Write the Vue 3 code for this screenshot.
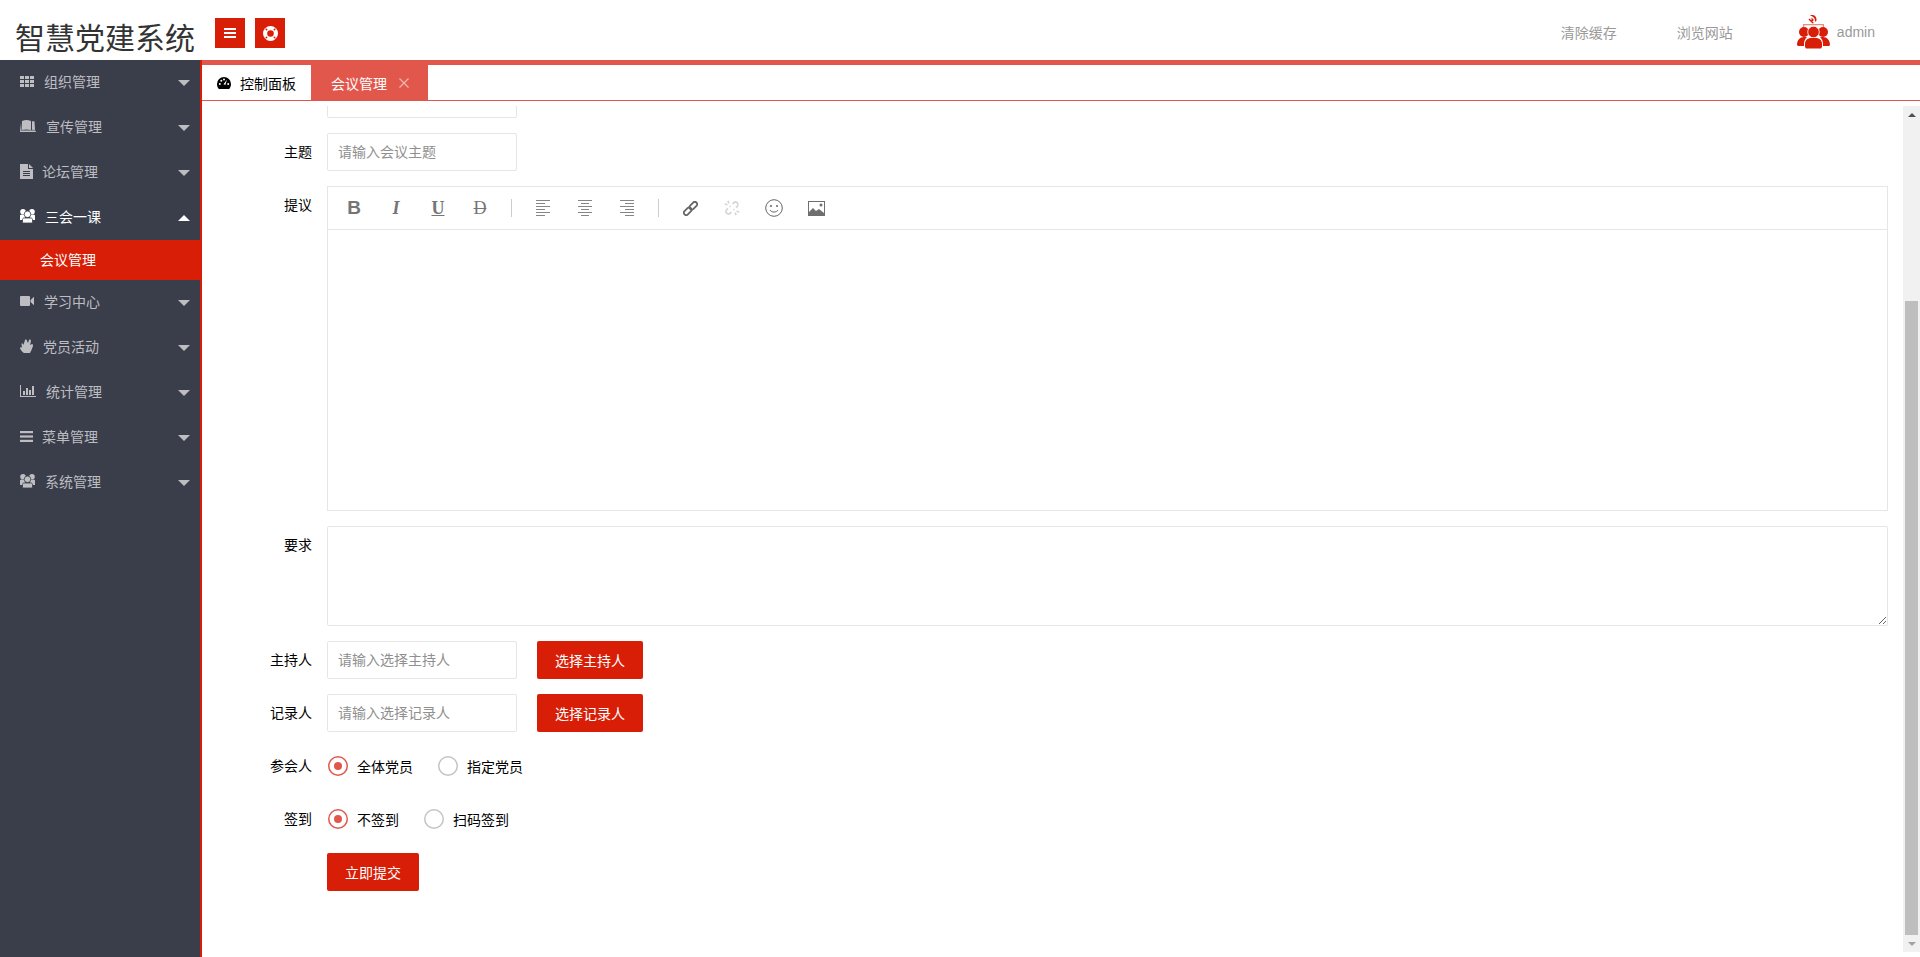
<script setup>
const people = (c) => `<g fill="${c}"><circle cx="3" cy="2.800" r="2.800"/><circle cx="12" cy="2.800" r="2.800"/><path d="M0 6.500C0 6 .5 5.800 1 5.800h4v5.200H0zM10 5.800h4c.5 0 1 .2 1 .7V11h-5z"/><g stroke="#3a3e4b" stroke-width=".8"><circle cx="7.500" cy="5.300" r="3.300"/><path d="M4 9h7c1 0 1.500.8 1.500 1.500V13c0 .6-.5 1-1 1h-8c-.5 0-1-.4-1-1v-2.500C2.500 9.800 3 9 4 9z"/></g></g>`
const menu = [
  { name: '组织管理', off: 24, w: 14, h: 11, svg: '<g fill="#bdbdc2"><rect x="0" y="0" width="4" height="3"/><rect x="5" y="0" width="4" height="3"/><rect x="10" y="0" width="4" height="3"/><rect x="0" y="4" width="4" height="3"/><rect x="5" y="4" width="4" height="3"/><rect x="10" y="4" width="4" height="3"/><rect x="0" y="8" width="4" height="3"/><rect x="5" y="8" width="4" height="3"/><rect x="10" y="8" width="4" height="3"/></g>' },
  { name: '宣传管理', off: 26, w: 16, h: 12, svg: '<path fill="#bdbdc2" d="M2 1c3-1.300 6-1.300 9 0v9c-3-.8-6-.8-9.500 0zM12 1.500c1-.4 1.800-.4 2.500 0l.5 8.500-3-.2zM.8 3 0 12h16l-.6-1.500H1z"/>' },
  { name: '论坛管理', off: 22, w: 13, h: 15, svg: '<path fill="#bdbdc2" d="M0 0h8v5h5v10H0z"/><path fill="#bdbdc2" d="M9 0l4 4H9z"/><g fill="#3a3e4b"><rect x="3" y="7" width="7" height="1"/><rect x="3" y="9" width="7" height="1"/><rect x="3" y="11" width="7" height="1"/></g>' },
  { name: '三会一课', off: 25, w: 15, h: 14, open: true, svg: people('#fff') },
  { name: '学习中心', off: 24, w: 14, h: 10, svg: '<path fill="#bdbdc2" d="M1 0h8a1 1 0 0 1 1 1v8a1 1 0 0 1-1 1H1a1 1 0 0 1-1-1V1a1 1 0 0 1 1-1zM10.500 4 14 .8v8.400L10.500 6z"/>' },
  { name: '党员活动', off: 23, w: 13, h: 14, svg: '<path fill="#bdbdc2" d="M5 1c1-1 2 0 2 1l1 2 1-3c1-1 2 0 2 1l-1 4 2-1c1 0 1 1 1 2-1 3-2 5-3 7H4C2 13 0 10 0 9c0-1 1-1 2-.5L1.500 5c0-1 1-1 1.500 0l.5 1z"/>' },
  { name: '统计管理', off: 26, w: 16, h: 12, svg: '<g fill="#bdbdc2"><rect x="0" y="0" width="1" height="12"/><rect x="0" y="11" width="16" height="1"/><rect x="3" y="6" width="2" height="4"/><rect x="6" y="3" width="2" height="7"/><rect x="9" y="5" width="2" height="5"/><rect x="12" y="1" width="2" height="9"/></g>' },
  { name: '菜单管理', off: 22, w: 13, h: 11, svg: '<g fill="#bdbdc2"><rect y="0" width="13" height="2.200"/><rect y="4.400" width="13" height="2.200"/><rect y="8.800" width="13" height="2.200"/></g>' },
  { name: '系统管理', off: 25, w: 15, h: 14, svg: people('#bdbdc2') }
]
const before = menu.slice(0, 4)
const after = menu.slice(4)
</script>

<template>
  <div class="app">
    <header class="top">
      <div class="logo">智慧党建系统</div>
      <button class="sq">
        <svg width="12" height="10" viewBox="0 0 12 10"><g fill="#fff"><rect width="12" height="2"/><rect y="4" width="12" height="2"/><rect y="8" width="12" height="2"/></g></svg>
      </button>
      <button class="sq sq2">
        <svg width="15" height="15" viewBox="0 0 15 15"><circle cx="7.500" cy="7.500" r="7.500" fill="#fff"/><circle cx="7.500" cy="7.500" r="3.300" fill="#d81e06"/><g stroke="#d81e06" stroke-width="1.300"><path d="M2.600 2.600 4.200 4.200M12.400 2.600l-1.600 1.600M2.600 12.400l1.600-1.600M12.400 12.400l-1.600-1.600"/></g></svg>
      </button>
      <nav class="tools">
        <span class="tool">清除缓存</span>
        <span class="tool t2">浏览网站</span>
        <svg class="party" width="33" height="34" viewBox="0 0 33 34">
          <g fill="#d81e06">
            <path d="M13 .5c3.500-1.500 7 .5 6.500 5L18 7C18.500 3.500 16.500 1.500 13 .5zM11.500 4.500l1-1 4.500 4.500-1.500.5zM14.500 2.500l2.500 2.500-2.500 2z"/>
            <path d="M6 9h21v1.200H6zM6 9h1.200v3H6zM25.800 9H27v3h-1.200z" opacity=".5"/>
            <circle cx="7" cy="17" r="5"/><circle cx="26" cy="17" r="5"/>
            <path d="M0 30c0-5 3-8 7-8h3c-2 2-3 4-3 7v2H1zM33 30c0-5-3-8-7-8h-3c2 2 3 4 3 7v2h6z"/>
            <circle cx="16.500" cy="17" r="5.800" stroke="#fff" stroke-width=".8"/>
            <path d="M8 32v-3c0-4 3-6 6-6h5c3 0 6 2 6 6v3l-1 1.500H9z"/>
          </g>
        </svg>
        <span class="user">admin</span>
      </nav>
    </header>
    <div class="body">
      <aside class="side">
        <div v-for="m in before" :key="m.name" class="item" :class="{ open: m.open }">
          <span class="ic" :style="{ width: m.off + 'px' }"><svg :width="m.w" :height="m.h" :viewBox="`0 0 ${m.w} ${m.h}`" v-html="m.svg"></svg></span>
          <span>{{ m.name }}</span>
          <i class="caret" :class="{ up: m.open }"></i>
        </div>
        <div class="sub">会议管理</div>
        <div v-for="m in after" :key="m.name" class="item">
          <span class="ic" :style="{ width: m.off + 'px' }"><svg :width="m.w" :height="m.h" :viewBox="`0 0 ${m.w} ${m.h}`" v-html="m.svg"></svg></span>
          <span>{{ m.name }}</span>
          <i class="caret"></i>
        </div>
      </aside>
      <main class="main">
        <div class="tabs">
          <div class="tab">
            <svg width="14" height="12" viewBox="0 0 14 12"><path fill="#000" d="M7 0a7 7 0 0 1 7 7c0 2-.7 3.700-1.800 5H1.800A7 7 0 0 1 0 7a7 7 0 0 1 7-7z"/><g fill="#fff"><circle cx="2.800" cy="7" r="1"/><circle cx="4.300" cy="3.800" r="1"/><circle cx="7" cy="2.400" r="1"/><circle cx="11.200" cy="7" r="1"/><path d="M10 2.800 8.300 8 6.500 7.300z"/></g></svg>
            <span>控制面板</span>
          </div>
          <div class="tab on">
            <span>会议管理</span>
            <svg width="10" height="10" viewBox="0 0 10 10"><path d="M.5.500l9 9M9.500.500l-9 9" stroke="#f2b6b1" stroke-width="1.200" fill="none"/></svg>
          </div>
        </div>
        <div class="pane">
          <div class="content">
            <form class="form" @submit.prevent>
              <div class="row"><label class="lab"></label><input class="inp" /></div>
              <div class="row"><label class="lab">主题</label><input class="inp" placeholder="请输入会议主题" /></div>
              <div class="row">
                <label class="lab">提议</label>
                <div class="editor">
                  <div class="bar">
                    <span class="b tb tB">B</span>
                    <span class="b tb tI">I</span>
                    <span class="b tb tU">U</span>
                    <span class="b tb tD">D</span>
                    <span class="sep"></span>
                    <span class="b"><svg width="14" height="16" viewBox="0 0 14 16"><path stroke="#858585" fill="none" d="M0 .5h14M0 3.500h9M0 6.500h14M0 9.500h9M0 12.500h14M0 15.500h9"/></svg></span>
                    <span class="b"><svg width="14" height="16" viewBox="0 0 14 16"><path stroke="#858585" fill="none" d="M0 .5h14M3 3.500h8M0 6.500h14M3 9.500h8M0 12.500h14M3 15.500h8"/></svg></span>
                    <span class="b"><svg width="14" height="16" viewBox="0 0 14 16"><path stroke="#858585" fill="none" d="M0 .5h14M5 3.500h9M0 6.500h14M5 9.500h9M0 12.500h14M5 15.500h9"/></svg></span>
                    <span class="sep"></span>
                    <span class="b"><svg width="15" height="15" viewBox="0 0 16 16"><g fill="none" stroke="#666" stroke-width="1.900" transform="rotate(-45 8 8)"><rect x="-1" y="5.500" width="9.500" height="5" rx="2.500"/><rect x="7.500" y="5.500" width="9.500" height="5" rx="2.500"/></g></svg></span>
                    <span class="b"><svg width="16" height="16" viewBox="0 0 16 16"><g fill="none" stroke="#d6d6d6" stroke-width="1.700"><path d="M8.500 4 10 2.500a2.600 2.600 0 0 1 3.600 3.600L12 7.700"/><path d="M7.500 12 6 13.500A2.600 2.600 0 0 1 2.400 9.900L4 8.300"/><path d="M4 .8l.8 2.700M.8 4l2.700.8M12 15.200l-.8-2.700M15.200 12l-2.700-.8M9.500 9l1 1M6.500 7l-1-1"/></g></svg></span>
                    <span class="b"><svg width="18" height="18" viewBox="0 0 18 18"><circle cx="9" cy="9" r="8.300" fill="none" stroke="#666" stroke-width="1"/><circle cx="6" cy="7" r="1" fill="#666"/><circle cx="12" cy="7" r="1" fill="#666"/><path d="M5 11c1.500 2.700 6.500 2.700 8 0" fill="none" stroke="#666"/></svg></span>
                    <span class="b"><svg width="17" height="15" viewBox="0 0 17 15"><path fill="#6f6f6f" d="M0 0h17v15H0zM1 1v13h15V1z" fill-rule="evenodd"/><path fill="#6f6f6f" d="M1 14v-3l4-4 3 3 3-2 5 4v2z"/><circle cx="13" cy="4" r="1.500" fill="#6f6f6f"/></svg></span>
                  </div>
                </div>
              </div>
              <div class="row"><label class="lab">要求</label><textarea class="area"></textarea></div>
              <div class="row">
                <label class="lab">主持人</label><input class="inp" placeholder="请输入选择主持人" />
                <button class="btn mg">选择主持人</button>
              </div>
              <div class="row">
                <label class="lab">记录人</label><input class="inp" placeholder="请输入选择记录人" />
                <button class="btn mg">选择记录人</button>
              </div>
              <div class="row">
                <label class="lab">参会人</label>
                <div class="radios">
                  <span class="radio on"></span><span class="rt">全体党员</span>
                  <span class="radio"></span><span class="rt">指定党员</span>
                </div>
              </div>
              <div class="row">
                <label class="lab">签到</label>
                <div class="radios">
                  <span class="radio on"></span><span class="rt">不签到</span>
                  <span class="radio"></span><span class="rt">扫码签到</span>
                </div>
              </div>
              <div class="row"><label class="lab"></label><button class="btn">立即提交</button></div>
            </form>
          </div>
          <div class="scroll">
            <span class="arr aup"></span>
            <span class="thumb"></span>
            <span class="arr adn"></span>
          </div>
        </div>
      </main>
    </div>
  </div>
</template>

<style scoped>
.app { width: 1920px; height: 957px; display: flex; flex-direction: column; overflow: hidden; background: #fff; font: 14px "Liberation Sans", "Noto Sans CJK SC", sans-serif; color: #000; }
.top { height: 60px; flex: none; display: flex; align-items: flex-start; }
.logo { font-size: 30px; line-height: 30px; color: #333; margin: 24px 0 0 15px; white-space: nowrap; }
.sq { width: 30px; height: 30px; margin: 18px 0 0 20px; padding: 0; border: 0; background: #d81e06; display: flex; align-items: center; justify-content: center; }
.sq2 { margin-left: 10px; }
.tools { margin-left: auto; height: 60px; padding: 3px 45px 0 0; box-sizing: border-box; display: flex; align-items: center; color: #999; }
.tool { margin-right: 60px; }
.t2 { margin-right: 64px; }
.party { margin: 1px 7px 0 0; }
.user { font-size: 14px; }
.body { flex: 1; display: flex; min-height: 0; }
.side { width: 200px; flex: none; background: #3a3e4b; border-right: 2px solid #d81e06; color: #bdbdc2; }
.item { height: 45px; box-sizing: border-box; display: flex; align-items: center; padding: 0 0 3px 20px; position: relative; }
.item.open { color: #fff; }
.ic { display: flex; align-items: center; flex: none; }
.ic svg { display: block; }
.caret { position: absolute; right: 10px; top: 20px; border: 6px solid transparent; border-bottom: 0; border-top: 6px solid #bdbdc2; }
.caret.up { border-top: 0; border-bottom: 6px solid #fff; }
.sub { height: 40px; line-height: 40px; margin-right: -2px; padding-left: 40px; background: #d81e06; color: #fff; position: relative; }
.main { flex: 1; min-width: 0; display: flex; flex-direction: column; }
.tabs { height: 41px; flex: none; box-sizing: border-box; border-top: 5px solid #e2574c; border-bottom: 1px solid #e2574c; display: flex; }
.tab { display: flex; align-items: center; padding: 0 15px; gap: 9px; height: 35px; }
.tab.on { background: #e2574c; color: #fff; padding: 0 19px 0 20px; gap: 12px; }
.pane { flex: 1; min-height: 0; margin: 5px 0; display: flex; }
.content { flex: 1; min-width: 0; overflow: hidden; padding-right: 15px; }
.form { margin-top: -26px; display: flex; flex-direction: column; gap: 15px; }
.row { display: flex; align-items: flex-start; }
.lab { width: 110px; flex: none; margin-right: 15px; text-align: right; line-height: 38px; }
.inp { width: 190px; height: 38px; box-sizing: border-box; border: 1px solid #e6e6e6; border-radius: 2px; padding: 0 10px; font: inherit; outline: 0; }
.inp::placeholder, .area::placeholder { color: #8f8f8f; }
.editor { flex: 1; height: 325px; box-sizing: border-box; border: 1px solid #e6e6e6; }
.bar { height: 43px; box-sizing: border-box; border-bottom: 1px solid #e6e6e6; padding-left: 5px; display: flex; align-items: center; }
.b { width: 42px; height: 42px; flex: none; display: flex; align-items: center; justify-content: center; }
.tb { color: #757575; line-height: 1; }
.tB { font: bold 19px "Liberation Sans", sans-serif; }
.tI { font: italic bold 18px "Liberation Serif", serif; }
.tU { font: bold 18px "Liberation Serif", serif; text-decoration: underline; }
.tD { font: 18px "Liberation Serif", serif; text-decoration: line-through; }
.sep { width: 21px; flex: none; display: flex; justify-content: center; }
.sep::before { content: ""; width: 1px; height: 18px; background: #ccc; }
.area { flex: 1; height: 100px; box-sizing: border-box; border: 1px solid #e6e6e6; border-radius: 2px; padding: 6px 10px; font: inherit; outline: 0; display: block; }
.btn { height: 38px; padding: 0 18px; border: 0; border-radius: 2px; background: #d81e06; color: #fff; font: inherit; }
.mg { margin-left: 20px; }
.radios { height: 38px; display: flex; align-items: center; padding-left: 1px; }
.radio { width: 20px; height: 20px; box-shadow: inset 0 0 0 1.500px #c4c4c4; border-radius: 50%; display: flex; align-items: center; justify-content: center; margin-right: 9px; }
.radio.on { box-shadow: inset 0 0 0 1.500px #e2574c; }
.radio.on::before { content: ""; width: 8px; height: 8px; border-radius: 50%; background: #e2574c; }
.rt { margin-right: 25px; }
.scroll { width: 17px; flex: none; background: #f1f1f1; display: flex; flex-direction: column; align-items: center; }
.arr { height: 17px; flex: none; display: flex; align-items: center; }
.arr::before { content: ""; border: 4px solid transparent; }
.aup::before { border-top: 0; border-bottom: 4px solid #505050; }
.adn::before { border-bottom: 0; border-top: 4px solid #a3a3a3; }
.thumb { width: 13px; height: 634px; margin-top: auto; background: #bebebe; }
</style>

<style>
html, body { margin: 0; overflow: hidden; }
</style>
